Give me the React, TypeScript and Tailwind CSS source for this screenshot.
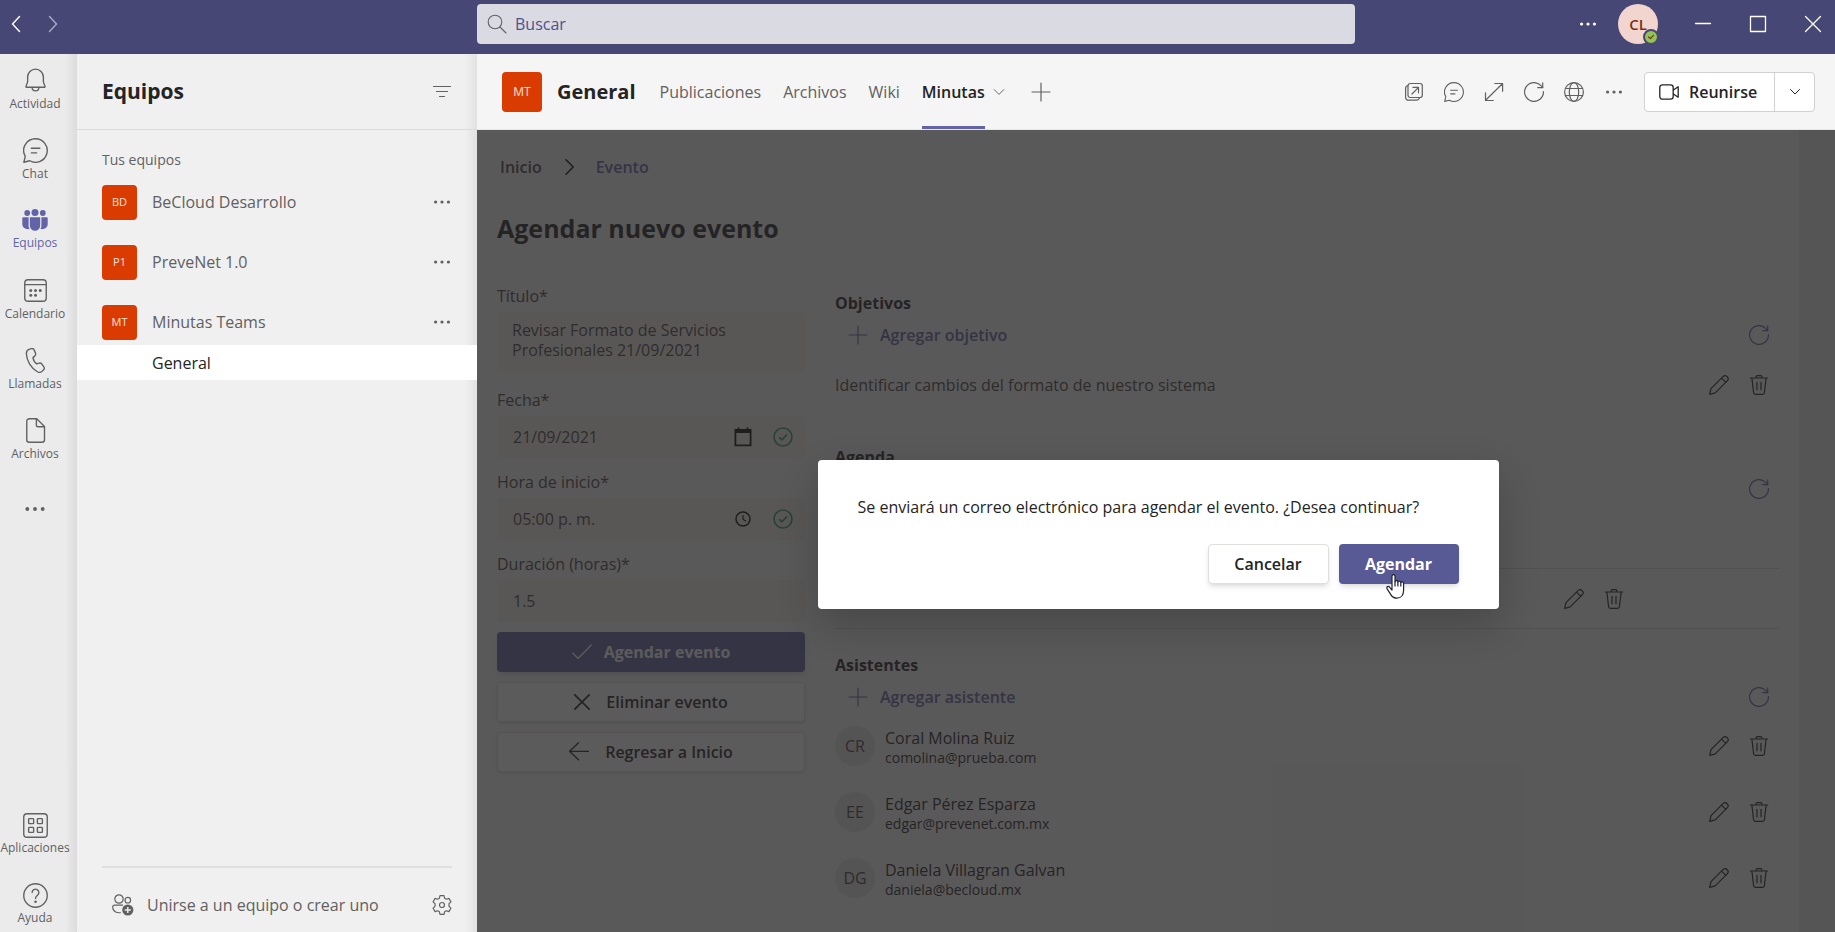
import React from 'react';

interface IconProps {
  className?: string;
}

function Icon({ className = 'h-5 w-5', width = 1, children }: IconProps & { width?: number; children: React.ReactNode }) {
  return (
    <svg
      viewBox="0 0 20 20"
      className={className}
      fill="none"
      stroke="currentColor"
      strokeWidth={width}
      strokeLinecap="round"
      strokeLinejoin="round"
      aria-hidden="true"
    >
      {children}
    </svg>
  );
}

const BellIcon = ({ className }: IconProps) => (
  <Icon className={className} width={1.1}>
    <path d="M10 .9a6.300 6.300 0 0 0-6.300 6.300v3.900l-1.300 3.600c-.1.400.1.700.5.700h14.200c.4 0 .6-.3.5-.7l-1.300-3.600V7.200A6.300 6.300 0 0 0 10 .9Z" />
    <path d="M7.300 15.600a2.700 2.700 0 0 0 5.400 0" />
  </Icon>
);

const ChatIcon = ({ className }: IconProps) => (
  <Icon className={className} width={1.1}>
    <path d="M10 .6A9.400 9.400 0 1 1 5.400 18.200L.7 19.400l1.100-4.700A9.400 9.400 0 0 1 10 .6Z" />
    <path d="M6.700 8.200h6.800M6.700 11.900h4.200" />
  </Icon>
);

const TeamsIcon = ({ className }: IconProps) => (
  <svg viewBox="0 0 26 22" className={className} fill="currentColor" aria-hidden="true">
    <circle cx="13" cy="3.500" r="3.500" />
    <circle cx="5.200" cy="4" r="2.900" />
    <circle cx="20.800" cy="4" r="2.900" />
    <path d="M7.800 8.300h10.400v8.200a5.200 5.200 0 0 1-10.400 0V8.300ZM1.300 8.300h5.300v8.200c0 1.400.4 2.500 1 3.500C3.700 20.800.3 18.600.3 15.300v-6a1 1 0 0 1 1-1ZM24.700 8.300h-5.300v8.200c0 1.400-.4 2.500-1 3.500 3.900.8 7.300-1.400 7.300-4.700v-6a1 1 0 0 0-1-1Z" />
  </svg>
);

const CalendarIcon = ({ className }: IconProps) => (
  <Icon className={className} width={1.1}>
    <rect x="1.400" y="1.400" width="17.200" height="17.200" rx="2.600" />
    <path d="M1.400 5.300h17.200" />
    <g fill="currentColor" stroke="none">
      <circle cx="6.200" cy="10" r="1.200" />
      <circle cx="10" cy="10" r="1.200" />
      <circle cx="13.800" cy="10" r="1.200" />
      <circle cx="6.200" cy="13.800" r="1.200" />
      <circle cx="10" cy="13.800" r="1.200" />
    </g>
  </Icon>
);

const PhoneIcon = ({ className }: IconProps) => (
  <Icon className={className} width={1.1}>
    <path d="M5.300.9 6.800.5c.9-.2 1.700.2 2.100 1l1.100 2.600c.3.800.1 1.600-.5 2.200L8 7.700c.2 1.800 1.400 3.900 2.900 5l2.100-.6c.8-.2 1.600.1 2.100.8l1.600 2.200c.5.700.4 1.700-.2 2.300l-1.100 1.100c-1.100 1.100-2.600 1.200-3.900.5C6.500 16.200 3 10.300 2.700 4.600 2.600 2.800 3.700 1.400 5.300.9Z" />
  </Icon>
);

const FileIcon = ({ className }: IconProps) => (
  <Icon className={className} width={1.1}>
    <path d="M11 .6H5A2 2 0 0 0 3 2.600v14.800a2 2 0 0 0 2 2h10.200a2 2 0 0 0 2-2V6.800L11 .6Z" />
    <path d="M10.700.8v5a1.200 1.200 0 0 0 1.200 1.200h5" />
  </Icon>
);

const DotsIcon = ({ className }: IconProps) => (
  <svg viewBox="0 0 20 20" className={className ?? 'h-5 w-5'} fill="currentColor" aria-hidden="true">
    <circle cx="3.600" cy="10" r="1.600" />
    <circle cx="10" cy="10" r="1.600" />
    <circle cx="16.400" cy="10" r="1.600" />
  </svg>
);

const AppsIcon = ({ className }: IconProps) => (
  <Icon className={className} width={1.1}>
    <rect x=".6" y=".6" width="18.800" height="18.800" rx="2.600" />
    <rect x="4.500" y="4.500" width="4" height="4" rx=".6" />
    <rect x="11.500" y="4.500" width="4" height="4" rx=".6" />
    <rect x="4.500" y="11.500" width="4" height="4" rx=".6" />
    <rect x="11.500" y="11.500" width="4" height="4" rx=".6" />
  </Icon>
);

const HelpIcon = ({ className }: IconProps) => (
  <Icon className={className} width={1.1}>
    <circle cx="10" cy="10" r="9.400" />
    <path d="M7.300 7.600a2.700 2.700 0 1 1 4.300 2.200c-.9.700-1.600 1.300-1.600 2.500" />
    <circle cx="10" cy="15" r=".5" fill="currentColor" />
  </Icon>
);

const JoinIcon = ({ className }: IconProps) => (
  <svg viewBox="0 0 22 22" className={className} fill="none" stroke="currentColor" strokeWidth="1.200" aria-hidden="true">
    <circle cx="7" cy="5" r="4.200" />
    <circle cx="15.800" cy="6.200" r="2.800" />
    <path d="M11 11.200H2.700a2 2 0 0 0-2 2c0 3.600 3 5.900 8 5.500" />
    <circle cx="15.800" cy="16" r="5.600" fill="currentColor" stroke="none" />
    <path d="M15.800 13v6M12.800 16h6" stroke="#f0f0f0" strokeWidth="1.400" />
  </svg>
);

const GearIcon = ({ className }: IconProps) => (
  <Icon className={className} width={1.2}>
    <path d="M8 .6h4l.6 2.600 1.800 1 2.500-.8 2 3.400-1.900 1.900v2.600l1.900 1.900-2 3.400-2.500-.8-1.800 1-.6 2.600H8l-.6-2.600-1.800-1-2.500.8-2-3.400L3 11.300V8.700L1.100 6.800l2-3.400 2.500.8 1.800-1L8 .6Z" />
    <circle cx="10" cy="10" r="2.500" />
  </Icon>
);

const RefreshIcon = ({ className }: IconProps) => (
  <Icon className={className} width={1.2}>
    <path d="M19.400 9.500A9.400 9.400 0 1 1 17 3.700l1.700 1.800" />
    <path d="M18.700.8v4.800h-5" />
  </Icon>
);

const PopOutIcon = ({ className }: IconProps) => (
  <Icon className={className} width={1.2}>
    <rect x="4" y="1.500" width="14.300" height="14" rx="2.200" />
    <path d="M4 3.500a3 3 0 0 0-2.400 3v8.400a3.300 3.300 0 0 0 3.300 3.300h7.800a3 3 0 0 0 2.800-2.300" />
    <path d="M8 12l6.300-6.400M9 5.400h5.500v5.400" />
  </Icon>
);

const ExpandIcon = ({ className }: IconProps) => (
  <Icon className={className} width={1.2}>
    <path d="M1.600 18.300 18.400 1.700M10.800 1.500h7.800v7.800M1.500 10.800v7.700h7.800" />
  </Icon>
);

const GlobeIcon = ({ className }: IconProps) => (
  <Icon className={className} width={1.2}>
    <circle cx="10" cy="10" r="9.400" />
    <ellipse cx="10" cy="10" rx="4.700" ry="9.400" />
    <path d="M1.500 6.500h17M1.500 13.500h17" />
  </Icon>
);

const VideoIcon = ({ className }: IconProps) => (
  <Icon className={className} width={1.3}>
    <rect x=".8" y="2.800" width="13.400" height="14.400" rx="2.600" />
    <path d="m14.400 8 4.800-3.200v10.400L14.400 12" />
  </Icon>
);

const PencilIcon = ({ className }: IconProps) => (
  <Icon className={className} width={1.2}>
    <path d="m2 13.700 12-12a2.900 2.900 0 0 1 4.200 4.200l-12 12L.7 19.300 2 13.700ZM12.600 3.200l4.200 4.200" />
  </Icon>
);

const TrashIcon = ({ className }: IconProps) => (
  <Icon className={className} width={1.2}>
    <path d="M1.300 3h17.400M2.900 3.200l1.700 14.500a1.800 1.800 0 0 0 1.800 1.600h7.200a1.800 1.800 0 0 0 1.800-1.600l1.700-14.500M7.200 2.800V1.600a1 1 0 0 1 1-1h3.600a1 1 0 0 1 1 1v1.200M8 7.300v7.500M12 7.300v7.500" />
  </Icon>
);

const ValidIcon = ({ className }: IconProps) => (
  <Icon className={className} width={1.7}>
    <circle cx="10" cy="10" r="9" />
    <path d="m6.500 10.600 2.300 2.200 4.800-5" />
  </Icon>
);

const DateIcon = () => (
  <svg viewBox="0 0 18 20" className="h-5 w-[18px] text-[#0d0d0d]" fill="none" stroke="currentColor" strokeWidth="1.800" aria-hidden="true">
    <path d="M1.400 3h15.200v15.300H1.400z" />
    <path d="M1.400 4.500h15.200" strokeWidth="3" />
    <path d="M4.500.5v3M13.500.5v3" />
  </svg>
);

const ClockIcon = () => (
  <svg viewBox="0 0 18 18" className="h-[18px] w-[18px] text-[#0d0d0d]" fill="none" stroke="currentColor" strokeWidth="1.500" aria-hidden="true">
    <circle cx="9" cy="9" r="7" />
    <path d="M9 5v4.300l3 2" strokeWidth="1.200" />
  </svg>
);

const PlusIcon = ({ className }: IconProps) => (
  <Icon className={className} width={1.2}>
    <path d="M10 1v18M1 10h18" />
  </Icon>
);

const PointerIcon = ({ className }: IconProps) => (
  <svg viewBox="0 0 19 25" className={className} fill="#fff" stroke="#1f2033" strokeWidth="1.200" strokeLinejoin="round" aria-hidden="true">
    <path d="M6 16V2.200C6 .2 9 .2 9 2.200v5.600c0-1.600 2.900-1.500 2.900.3 0-1.500 2.900-1.300 2.900.6.2-1.300 2.800-1 2.800.8v6.700c0 4.700-2.500 8-6.700 8-3.300 0-5-1.500-6.400-4.100L1 14.600c-.9-1.900 1.400-2.900 2.700-1.300L6 16Z" />
    <path d="M9 7.500v5M11.900 8v4.500M14.800 8.700v3.800" />
  </svg>
);

const navItems = [
  { label: 'Actividad', icon: BellIcon },
  { label: 'Chat', icon: ChatIcon },
  { label: 'Equipos', icon: TeamsIcon, active: true },
  { label: 'Calendario', icon: CalendarIcon },
  { label: 'Llamadas', icon: PhoneIcon },
  { label: 'Archivos', icon: FileIcon },
];

const teams = [
  { initials: 'BD', name: 'BeCloud Desarrollo' },
  { initials: 'P1', name: 'PreveNet 1.0' },
  { initials: 'MT', name: 'Minutas Teams' },
];

const attendees = [
  { initials: 'CR', name: 'Coral Molina Ruiz', email: 'comolina@prueba.com' },
  { initials: 'EE', name: 'Edgar Pérez Esparza', email: 'edgar@prevenet.com.mx' },
  { initials: 'DG', name: 'Daniela Villagran Galvan', email: 'daniela@becloud.mx' },
];

function TitleBar() {
  return (
    <header className="flex h-[54px] shrink-0 bg-[#464775] text-white">
      <div className="flex h-12 w-[477px] shrink-0 items-center gap-[17px] pl-[6px]">
        <button aria-label="Atrás">
          <Icon className="h-5 w-5" width={1.4}>
            <path d="M13.500 2.500 6.500 10l7 7.500" />
          </Icon>
        </button>
        <button aria-label="Adelante" className="text-[#a9aac4]">
          <Icon className="h-5 w-5" width={1.4}>
            <path d="m6.500 2.500 7 7.500-7 7.500" />
          </Icon>
        </button>
      </div>
      <label className="mt-1 flex h-10 flex-1 items-center rounded bg-[#dadae3] pl-[10px] text-[#616161]">
        <Icon className="h-5 w-5" width={1.1}>
          <circle cx="8" cy="8" r="6.800" />
          <path d="m13 13 6 6" />
        </Icon>
        <input
          type="search"
          aria-label="Buscar"
          placeholder="Buscar"
          className="ml-2 flex-1 bg-transparent text-base text-[#464775] outline-none placeholder:text-[#4f508c]"
        />
      </label>
      <div className="flex h-12 w-[480px] shrink-0 items-center justify-end pr-3">
        <button aria-label="Más opciones">
          <DotsIcon />
        </button>
        <button className="relative mr-[35px] ml-5 flex h-10 w-10 items-center justify-center rounded-full bg-[#f1d5ce] text-[15px] font-semibold text-[#7a2e1c]">
          CL
          <span className="absolute -right-[1px] -bottom-[1px] flex h-4 w-4 items-center justify-center rounded-full border-2 border-[#464775] bg-[#92c353]">
            <Icon className="h-2 w-2" width={3}>
              <path d="m4 10 4.500 4L16 6" />
            </Icon>
          </span>
        </button>
        <button aria-label="Minimizar">
          <Icon className="h-5 w-5" width={1.3}>
            <path d="M2.500 9.500h15" />
          </Icon>
        </button>
        <button aria-label="Maximizar" className="mx-[35px]">
          <Icon className="h-5 w-5" width={1.3}>
            <path d="M2.500 2.500h15v15h-15z" />
          </Icon>
        </button>
        <button aria-label="Cerrar">
          <Icon className="h-5 w-5" width={1.3}>
            <path d="m2.500 2.500 15 15M17.500 2.500l-15 15" />
          </Icon>
        </button>
      </div>
    </header>
  );
}

function AppRail() {
  return (
    <nav className="flex w-[77px] shrink-0 flex-col bg-linear-to-r from-[#ebebeb] from-85% to-[#dcdcdc] text-xs text-[#616161]">
      {navItems.map(({ label, icon: NavIcon, active }) => (
        <a
          key={label}
          href="#"
          className={`flex h-[70px] w-[70px] flex-col items-center gap-[3px] pt-[14px] leading-4 ${active ? 'text-[#6264a7]' : ''}`}
        >
          <NavIcon className={active ? 'h-6 w-[26px]' : 'h-[25px] w-[25px]'} />
          {label}
        </a>
      ))}
      <button aria-label="Más aplicaciones" className="flex h-[70px] w-[70px] items-center justify-center">
        <DotsIcon className="h-6 w-6" />
      </button>
      <a href="#" className="mt-auto flex h-[70px] w-[70px] flex-col items-center gap-[2px] pt-[13px] leading-4">
        <AppsIcon className="h-[25px] w-[25px]" />
        Aplicaciones
      </a>
      <a href="#" className="flex h-[62px] w-[70px] flex-col items-center gap-[2px] pt-[13px] leading-4">
        <HelpIcon className="h-[25px] w-[25px]" />
        Ayuda
      </a>
    </nav>
  );
}

function TeamsPanel() {
  return (
    <aside className="flex w-[400px] shrink-0 flex-col bg-linear-to-r from-[#f0f0f0] from-97% to-[#e2e2e2] text-[#616161]">
      <div className="flex h-[76px] items-center justify-between border-b border-[#dcdcdc] pr-[25px] pl-[25px]">
        <h1 className="text-[21px] font-bold text-[#242424]">Equipos</h1>
        <button aria-label="Filtrar">
          <Icon className="h-5 w-5" width={1.2}>
            <path d="M1.500 4.500h17M4.500 9.500h11M7.500 14.500h5" />
          </Icon>
        </button>
      </div>
      <h2 className="mt-[18px] pl-[25px] text-sm leading-6">Tus equipos</h2>
      <ul>
        {teams.map((team) => (
          <li key={team.initials} className="flex h-[60px] items-center pr-[25px] pl-[25px]">
            <span className="flex h-[35px] w-[35px] items-center justify-center rounded bg-[#da3b01] text-[11px] text-[#fbe3da]">
              {team.initials}
            </span>
            <span className="ml-[15px] flex-1 text-base">{team.name}</span>
            <button aria-label={`Opciones de ${team.name}`}>
              <DotsIcon />
            </button>
          </li>
        ))}
      </ul>
      <a href="#" className="-mt-[7px] flex h-[35px] items-center bg-white pl-[75px] text-base text-[#242424]">
        General
      </a>
      <div className="mx-[25px] mt-auto flex h-[66px] items-center border-t-2 border-[#dfdfdf] pt-[10px] pl-[10px]">
        <JoinIcon className="h-[22px] w-[22px]" />
        <a href="#" className="ml-[13px] flex-1 text-base">
          Unirse a un equipo o crear uno
        </a>
        <button aria-label="Configuración">
          <GearIcon />
        </button>
      </div>
    </aside>
  );
}

function ChannelHeader() {
  return (
    <div className="flex h-[76px] shrink-0 items-center border-b border-[#e6e6e6] bg-[#f5f5f5] pr-5 pl-[25px] text-[#616161]">
      <span className="flex h-10 w-10 items-center justify-center rounded bg-[#da3b01] text-xs text-[#fbe3da]">MT</span>
      <h2 className="ml-[15px] text-xl font-bold text-[#242424]">General</h2>
      <nav className="ml-6 flex h-full items-stretch gap-[22px] text-base">
        <a href="#" className="flex items-center">Publicaciones</a>
        <a href="#" className="flex items-center">Archivos</a>
        <a href="#" className="flex items-center">Wiki</a>
        <a href="#" className="flex items-center border-y-3 border-t-transparent border-b-[#6264a7] font-semibold text-[#242424]">
          Minutas
        </a>
      </nav>
      <button aria-label="Opciones de pestaña" className="ml-2">
        <Icon className="h-3 w-3" width={1.6}>
          <path d="m2 6 8 8 8-8" />
        </Icon>
      </button>
      <button aria-label="Agregar pestaña" className="ml-[26px]">
        <PlusIcon />
      </button>
      <div className="ml-auto flex items-center gap-5">
        <button aria-label="Abrir en ventana"><PopOutIcon /></button>
        <button aria-label="Conversación"><ChatIcon /></button>
        <button aria-label="Expandir"><ExpandIcon /></button>
        <button aria-label="Actualizar"><RefreshIcon /></button>
        <button aria-label="Ir al sitio web"><GlobeIcon /></button>
        <button aria-label="Más opciones"><DotsIcon /></button>
      </div>
      <div className="ml-5 flex h-10 rounded border border-[#d1d1d1] bg-white text-[#242424]">
        <button className="flex w-[130px] items-center gap-[10px] border-r border-[#d1d1d1] pl-[14px] text-base font-semibold">
          <VideoIcon />
          Reunirse
        </button>
        <button aria-label="Opciones de reunión" className="flex w-[39px] items-center justify-center">
          <Icon className="h-[10px] w-[10px]" width={2}>
            <path d="m1 5 9 9 9-9" />
          </Icon>
        </button>
      </div>
    </div>
  );
}

interface FieldProps {
  id: string;
  label: string;
  value: string;
  children?: React.ReactNode;
}

function Field({ id, label, value, children }: FieldProps) {
  return (
    <div>
      <label htmlFor={id} className="mb-1 block leading-6">
        {label}
      </label>
      <div className="flex h-[42px] items-center rounded-sm bg-[#f3f0ea] pr-3 pl-4">
        <input id={id} defaultValue={value} className="min-w-0 flex-1 bg-transparent outline-none" />
        {children}
      </div>
    </div>
  );
}

function SectionHeader({ title, action }: { title: string; action?: string }) {
  return (
    <>
      <h3 className="leading-6 font-bold text-[#242424]">{title}</h3>
      <div className="flex h-10 items-center text-[#6264a7]">
        {action && (
          <button className="flex items-center gap-3 pl-[13px] font-semibold">
            <PlusIcon className="h-5 w-5" />
            {action}
          </button>
        )}
        <button aria-label={`Actualizar ${title}`} className="ml-auto flex w-10 justify-center">
          <RefreshIcon />
        </button>
      </div>
    </>
  );
}

function RowActions() {
  return (
    <div className="ml-auto flex h-10 items-center text-[#242424]">
      <button aria-label="Editar" className="flex w-10 justify-center"><PencilIcon /></button>
      <button aria-label="Eliminar" className="flex w-10 justify-center"><TrashIcon /></button>
    </div>
  );
}

function EventForm() {
  const secondaryButton =
    'flex h-10 items-center justify-center gap-4 rounded-sm border border-[#e1dfdd] bg-white font-semibold text-[#242424] shadow';

  return (
    <form className="flex w-[308px] shrink-0 flex-col gap-3">
      <div className="mb-1">
        <label htmlFor="titulo" className="mb-1 block leading-6">
          Título*
        </label>
        <textarea
          id="titulo"
          className="block h-[60px] w-full resize-none rounded-sm bg-[#f3f0ea] px-[15px] py-2 leading-5 outline-none"
          defaultValue="Revisar Formato de Servicios Profesionales 21/09/2021"
        />
      </div>
      <Field id="fecha" label="Fecha*" value="21/09/2021">
        <DateIcon />
        <ValidIcon className="ml-[21px] h-5 w-5 text-[#35a06b]" />
      </Field>
      <Field id="hora" label="Hora de inicio*" value="05:00 p. m.">
        <ClockIcon />
        <ValidIcon className="ml-[21px] h-5 w-5 text-[#35a06b]" />
      </Field>
      <Field id="duracion" label="Duración (horas)*" value="1.5" />
      <div className="-mt-[2px] flex flex-col gap-[10px]">
        <button
          type="button"
          className="flex h-10 items-center justify-center gap-3 rounded-sm bg-[#6264a7] font-bold text-white shadow-md"
        >
          <Icon className="h-5 w-5" width={1.3}>
            <path d="m.8 11 5.200 5.500L19.200 3" />
          </Icon>
          Agendar evento
        </button>
        <button type="button" className={secondaryButton}>
          <Icon className="h-4 w-4" width={2.2}>
            <path d="m1 1 18 18M19 1 1 19" />
          </Icon>
          Eliminar evento
        </button>
        <button type="button" className={secondaryButton}>
          <Icon className="h-5 w-5" width={1.3}>
            <path d="M19.500 9.300H.6M9.500.8.6 9.300l8.900 8.500" />
          </Icon>
          Regresar a Inicio
        </button>
      </div>
    </form>
  );
}

function EventDetails() {
  return (
    <div className="min-w-0 flex-1 pt-[7px]">
      <SectionHeader title="Objetivos" action="Agregar objetivo" />
      <div className="flex h-[60px] items-center">
        <p>Identificar cambios del formato de nuestro sistema</p>
        <RowActions />
      </div>

      <div className="mt-[30px]">
        <SectionHeader title="Agenda" />
        <div className="mt-[59px] flex h-[61px] items-center border-y border-[#d6d6d6] pr-[145px]">
          <RowActions />
        </div>
      </div>

      <div className="mt-6">
        <SectionHeader title="Asistentes" action="Agregar asistente" />
        <ul>
          {attendees.map((person) => (
            <li key={person.email} className="flex h-[66px] items-start pt-[9px]">
              <span className="flex h-10 w-10 items-center justify-center rounded-full bg-[#e1e1e1]">
                {person.initials}
              </span>
              <div className="ml-[10px] text-[#242424]">
                <p className="leading-6">{person.name}</p>
                <p className="text-sm leading-4">{person.email}</p>
              </div>
              <RowActions />
            </li>
          ))}
        </ul>
      </div>
    </div>
  );
}

function ConfirmDialog() {
  return (
    <div className="absolute inset-0 flex items-center justify-center bg-[#252424]/75 pt-[6px] pl-1">
      <div
        role="dialog"
        aria-modal="true"
        className="w-[681px] rounded bg-white px-10 pt-[35px] pb-[25px] text-base text-[#242424] shadow-[0_16px_40px_rgba(0,0,0,0.2)]"
      >
        <p className="leading-6">Se enviará un correo electrónico para agendar el evento. ¿Desea continuar?</p>
        <div className="mt-[25px] flex justify-end gap-[10px] font-semibold">
          <button className="h-10 w-[121px] rounded-sm border border-[#e1dfdd] bg-white shadow-md">Cancelar</button>
          <button className="relative h-10 w-[120px] rounded-sm bg-[#585a96] font-bold text-white shadow-md">
            Agendar
            <PointerIcon className="absolute top-[30px] left-[47px] h-[25px] w-[19px]" />
          </button>
        </div>
      </div>
    </div>
  );
}

export default function App() {
  return (
    <div className="flex h-screen flex-col overflow-hidden font-['Segoe_UI','Open_Sans',sans-serif]">
      <TitleBar />
      <div className="flex min-h-0 flex-1">
        <AppRail />
        <TeamsPanel />
        <section className="flex min-w-0 flex-1 flex-col">
          <ChannelHeader />
          <div className="relative flex min-h-0 flex-1 bg-[#f5f5f5] text-base text-[#484644]">
            <main className="min-w-0 flex-1 overflow-hidden px-5 pt-[25px]">
              <nav className="flex items-center pl-[3px] leading-6 font-semibold">
                <a href="#" className="text-[#484848]">Inicio</a>
                <Icon className="mr-[18px] ml-5 h-4 w-4 text-[#111]" width={2}>
                  <path d="m5 1 9 9-9 9" />
                </Icon>
                <a href="#" className="text-[#6264a7]">Evento</a>
              </nav>
              <h1 className="mt-[31px] text-[25px] leading-9 font-bold text-[#242424]">Agendar nuevo evento</h1>
              <div className="mt-[38px] flex gap-[30px]">
                <EventForm />
                <EventDetails />
              </div>
            </main>
            <div className="w-9 shrink-0 bg-[#e8e8e8]" />
            <ConfirmDialog />
          </div>
        </section>
      </div>
    </div>
  );
}
